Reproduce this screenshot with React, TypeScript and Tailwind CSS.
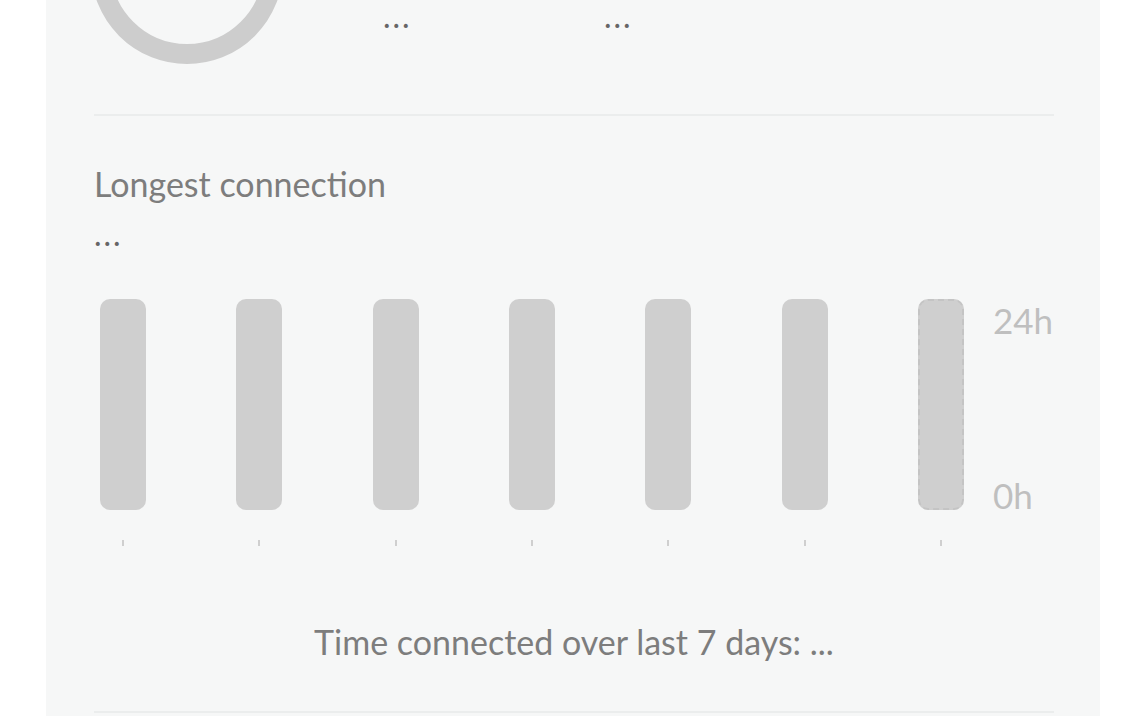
const days = [0, 1, 2, 3, 4, 5, 6];

function Ring() {
  return (
    <svg width="192" height="192" viewBox="0 0 192 192" className="shrink-0 -ml-[3px] -mt-[128px]">
      <circle cx="96" cy="96" r="86" fill="none" stroke="#cdcdcd" strokeWidth="20" />
    </svg>
  );
}

function Bar({ today }: { today: boolean }) {
  return (
    <div className="flex flex-col items-center w-[46px]">
      <div
        className={`w-[46px] h-[211px] rounded-[10px] bg-[#cfcfcf] ${
          today ? 'border-2 border-dashed border-[#c4c4c4]' : ''
        }`}
      />
      <div className="mt-[30px] w-[2px] h-[6px] bg-[#cfcfcf]" />
    </div>
  );
}

export default function App() {
  return (
    <div className="h-[716px] overflow-hidden bg-white" style={{ fontFamily: 'Lato, "Noto Sans", sans-serif' }}>
      <div className="mx-[46px] h-full bg-[#f6f7f7] pl-[48px] pr-[46px]">
        {/* Summary row, scrolled partly out of view */}
        <div className="h-[114px] flex items-start">
          <Ring />
          <div className="ml-[100px] mt-[4px] grid grid-cols-[221px_221px] text-[32px] leading-[24px] text-[#666] tracking-[2px]">
            <span>...</span>
            <span>...</span>
          </div>
        </div>
        <div className="h-[2px] bg-[#ebeded]" />

        {/* Longest connection */}
        <div className="pt-[51px]">
          <p className="text-[34px] leading-none text-[#7d7d7d]">Longest connection</p>
          <p className="mt-[17px] text-[32px] leading-none text-[#666] tracking-[2px]">...</p>
        </div>

        {/* Weekly chart */}
        <div className="mt-[49px] flex">
          <div className="ml-[6px] w-[864px] flex justify-between">
            {days.map(d => (
              <Bar key={d} today={d === 6} />
            ))}
          </div>
          <div className="ml-[29px] h-[211px] flex flex-col justify-between text-[35px] leading-none text-[#bfbfbf]">
            <span className="mt-[4px]">24h</span>
            <span className="-mb-[3px]">0h</span>
          </div>
        </div>

        <p className="mt-[79px] text-center text-[34px] leading-none text-[#7d7d7d]">
          Time connected over last 7 days: ...
        </p>
        <div className="mt-[52px] h-[2px] bg-[#ebeded]" />
      </div>
    </div>
  );
}
